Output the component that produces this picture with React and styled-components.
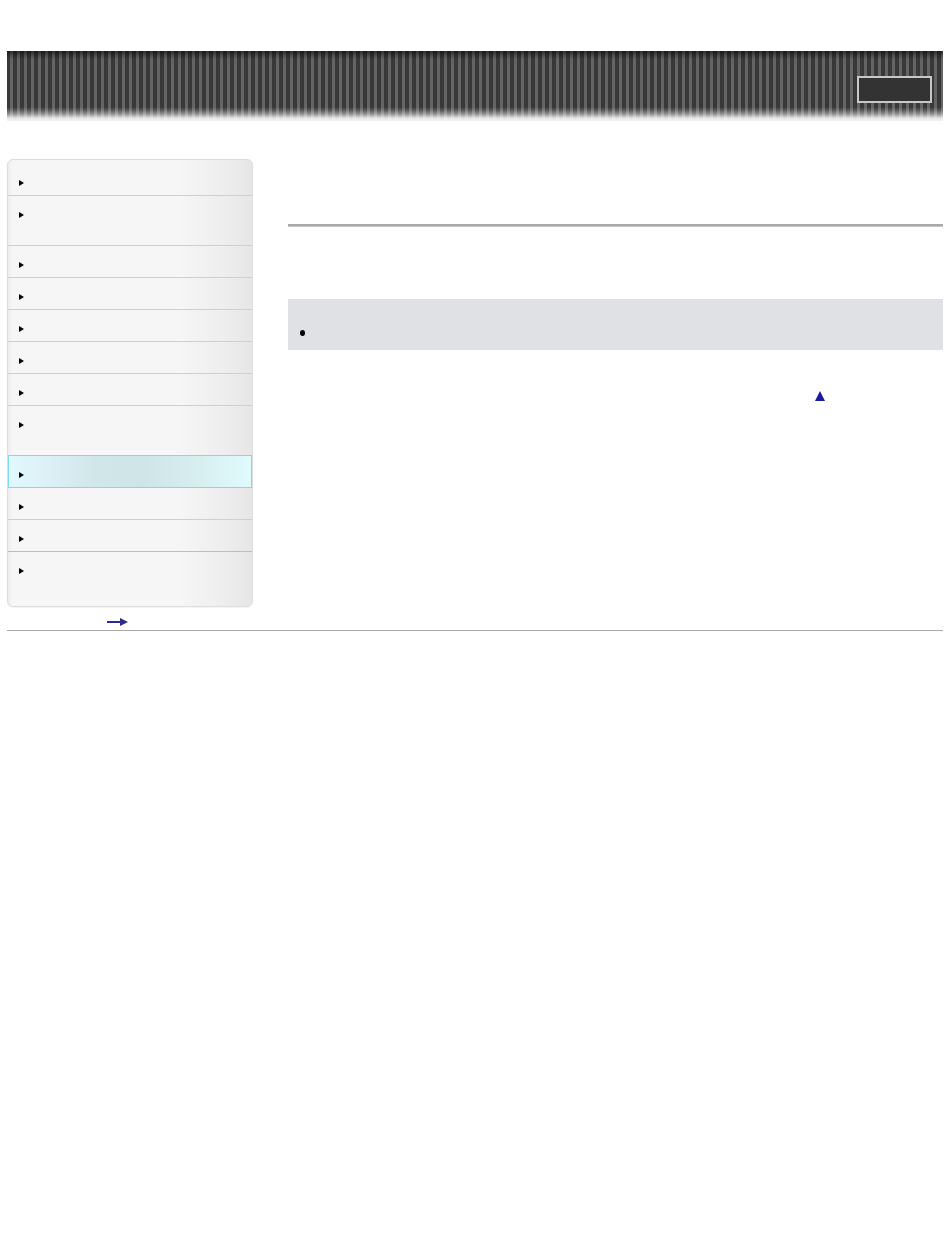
import React from "react";
import styled, { createGlobalStyle } from "styled-components";

const Global = createGlobalStyle`
  html, body { margin: 0; padding: 0; background: #fff; }
  body { font-family: "Liberation Sans", Arial, sans-serif; font-size: 12px; color: #000; }
`;

const Page = styled.div`
  width: 936px;
  padding: 51px 0 0 7px;
`;

const Header = styled.header`
  height: 70px;
  display: flex;
  justify-content: flex-end;
  align-items: flex-start;
  padding: 25px 11px 0 0;
  box-sizing: border-box;
  background:
    linear-gradient(
      to bottom,
      rgba(0, 0, 0, 0.55) 0px,
      rgba(0, 0, 0, 0.2) 5px,
      rgba(0, 0, 0, 0) 9px,
      rgba(0, 0, 0, 0) 56px,
      rgba(255, 255, 255, 0.15) 59px,
      rgba(255, 255, 255, 0.45) 63px,
      rgba(255, 255, 255, 0.85) 67px,
      rgba(240, 240, 240, 1) 69px,
      rgba(240, 240, 240, 1) 70px
    ),
    repeating-linear-gradient(
      90deg,
      #383838 0px,
      #383838 3px,
      #646464 3px,
      #646464 6px,
      #383838 6px,
      #383838 7px
    );
`;

const HeaderBox = styled.div`
  width: 75px;
  height: 27px;
  box-sizing: border-box;
  border: 2px solid #c8c8c8;
  background: #333;
`;

const Body = styled.div`
  display: flex;
  align-items: flex-start;
  margin-top: 38px;
  gap: 35px;
`;

const SideCol = styled.div`
  width: 246px;
  flex: none;
  display: flex;
  flex-direction: column;
`;

const Nav = styled.nav`
  box-sizing: border-box;
  border: 1px solid #dedede;
  border-radius: 6px;
  padding: 4px 0 4px;
  background: linear-gradient(
    to right,
    #ececec 0px,
    #f6f6f6 4px,
    #f6f6f6 170px,
    #eeeeee 215px,
    #e6e6e6 100%
  );
  box-shadow: 0 1px 1px rgba(0, 0, 0, 0.05);
`;

const NavRow = styled.div`
  box-sizing: border-box;
  height: ${(p) => (p.$tall ? 50 : 32)}px;
  padding: 16px 0 0 11px;
  border-bottom: ${(p) =>
    p.$last ? "none" : p.$strong ? "1px solid #bdbdbd" : "1px solid #cfcfcf"};
  ${(p) =>
    p.$active &&
    `
    border: 1px solid #80d8f6;
    margin-top: -1px;
    height: 33px;
    padding-top: 16px;
    padding-left: 10px;
    background: linear-gradient(
      to right,
      #e0f9fc 0%,
      #dff2f8 12%,
      #d2e7ea 35%,
      #cfe4e7 55%,
      #d6ecee 75%,
      #e0fbfc 100%
    );
  `}
`;

const Arrow = styled.span`
  display: block;
  width: 0;
  height: 0;
  border-left: 5px solid #000;
  border-top: 3px solid transparent;
  border-bottom: 3px solid transparent;
`;

const MoreLink = styled.a`
  display: flex;
  margin: 10px 0 0 100px;
  width: 22px;
  height: 10px;
  align-items: center;
`;

const Rule = styled.hr`
  margin: 3px 0 0;
  border: none;
  height: 1px;
  background: #a9a9a9;
  box-shadow: 0 1px 0 #d8d8d8;
  width: 936px;
`;

const Main = styled.main`
  flex: 1;
  display: flex;
  flex-direction: column;
`;

const TitleLine = styled.div`
  margin-top: 65px;
  height: 3px;
  background: linear-gradient(to bottom, #a8a8a8 0, #a8a8a8 2px, #c8c8c8 2px);
`;

const NoteBox = styled.div`
  margin-top: 72px;
  height: 51px;
  box-sizing: border-box;
  background: #dfe1e5;
  padding: 31px 0 0 12px;
`;

const Bullet = styled.span`
  display: block;
  width: 5px;
  height: 6px;
  border-radius: 50%;
  background: #000;
`;

const TopRow = styled.div`
  display: flex;
  justify-content: flex-end;
  padding-right: 118px;
  margin-top: 41px;
`;

const TopLink = styled.a`
  display: block;
  width: 0;
  height: 0;
  border-left: 5px solid transparent;
  border-right: 5px solid transparent;
  border-bottom: 10px solid #1c1c9a;
`;

const rows = [
  { tall: false },
  { tall: true },
  { tall: false },
  { tall: false },
  { tall: false },
  { tall: false },
  { tall: false },
  { tall: true },
  { tall: false, active: true },
  { tall: false },
  { tall: false, strong: true },
  { tall: true, last: true },
];

export default function App() {
  return (
    <>
      <Global />
      <Page>
        <Header>
          <HeaderBox />
        </Header>
        <Body>
          <SideCol>
            <Nav>
              {rows.map((r, i) => (
                <NavRow
                  key={i}
                  $tall={r.tall}
                  $active={r.active}
                  $strong={r.strong}
                  $last={r.last}
                >
                  <Arrow />
                </NavRow>
              ))}
            </Nav>
            <MoreLink href="#">
              <svg width="22" height="10" viewBox="0 0 22 10">
                <rect x="0" y="4" width="15" height="2" fill="#2b2b8e" />
                <path d="M13 1 L21 5 L13 9 Z" fill="#2b2b8e" />
              </svg>
            </MoreLink>
          </SideCol>
          <Main>
            <TitleLine />
            <NoteBox>
              <Bullet />
            </NoteBox>
            <TopRow>
              <TopLink href="#" />
            </TopRow>
          </Main>
        </Body>
        <Rule />
      </Page>
    </>
  );
}
